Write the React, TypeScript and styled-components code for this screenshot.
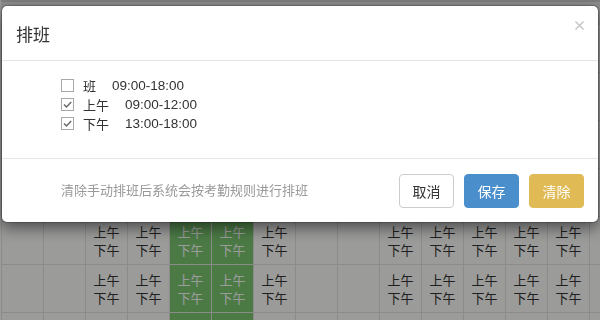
import React, { useState } from 'react';
import styled, { createGlobalStyle } from 'styled-components';

type Shift = { id: string; name: string; time: string; checked: boolean };

const initialShifts: Shift[] = [
  { id: 'day', name: '班', time: '09:00-18:00', checked: false },
  { id: 'am', name: '上午', time: '09:00-12:00', checked: true },
  { id: 'pm', name: '下午', time: '13:00-18:00', checked: true },
];

// column kinds of the calendar behind the dialog
const columns: Array<'empty' | 'work' | 'green'> = [
  'empty', 'empty', 'work', 'work', 'green', 'green', 'work',
  'empty', 'empty', 'work', 'work', 'work', 'work', 'work', 'empty',
];

// which calendar rows carry the am/pm labels (rows under the dialog are left blank)
const rows = [false, false, false, false, true, true, false];

const GlobalStyle = createGlobalStyle`
  html, body {
    margin: 0;
    padding: 0;
    overflow: hidden;
    background: #fff;
  }
  body {
    width: 600px;
    height: 320px;
    font-family: "Liberation Sans", "Noto Sans CJK SC", sans-serif;
    font-size: 13px;
    color: #333;
  }
`;

function App() {
  const [shifts, setShifts] = useState(initialShifts);

  const toggle = (id: string) => {
    setShifts(prev => prev.map(s => (s.id === id ? { ...s, checked: !s.checked } : s)));
  };

  return (
    <>
      <GlobalStyle />
      <Calendar>
        {columns.map((_, i) => (
          <HeadCell key={'h' + i} />
        ))}
        {rows.map((filled, r) =>
          columns.map((kind, i) => (
            <Cell key={r + '-' + i} $green={kind === 'green'}>
              {filled && kind !== 'empty' && (
                <>
                  <span>上午</span>
                  <span>下午</span>
                </>
              )}
            </Cell>
          ))
        )}
      </Calendar>

      <Backdrop />

      <Dialog>
        <Header>
          <Title>排班</Title>
          <CloseBtn aria-label="关闭">
            <svg width="9" height="9" viewBox="0 0 9 9">
              <path d="M0.5 0.5 L8.5 8.5 M8.5 0.5 L0.5 8.5" stroke="#c4c4c4" strokeWidth="1.4" />
            </svg>
          </CloseBtn>
        </Header>
        <Body>
          {shifts.map(s => (
            <ShiftRow key={s.id} onClick={() => toggle(s.id)}>
              <Box>
                {s.checked && (
                  <svg width="11" height="11" viewBox="0 0 11 11">
                    <path d="M2 5.5 L4.5 8 L9.2 3" fill="none" stroke="#6a6a6a" strokeWidth="1.5" />
                  </svg>
                )}
              </Box>
              <ShiftName>{s.name}</ShiftName>
              <ShiftTime>{s.time}</ShiftTime>
            </ShiftRow>
          ))}
        </Body>
        <Footer>
          <Hint>清除手动排班后系统会按考勤规则进行排班</Hint>
          <Btn $variant="default">取消</Btn>
          <Btn $variant="primary">保存</Btn>
          <Btn $variant="warning">清除</Btn>
        </Footer>
      </Dialog>
    </>
  );
}

const Calendar = styled.div`
  display: grid;
  grid-template-columns: repeat(15, 42px);
  grid-template-rows: 24px;
  grid-auto-rows: 48px;
  margin-left: 1px;
`;

const HeadCell = styled.div`
  background: #e9e9e9;
  border-top: 2px solid #cfcfcf;
  box-sizing: border-box;
`;

const Cell = styled.div<{ $green?: boolean }>`
  box-sizing: border-box;
  border-left: 1px solid #e3e3e3;
  border-top: 1px solid #e3e3e3;
  background: ${p => (p.$green ? '#7cc872' : '#fdfdfc')};
  color: ${p => (p.$green ? '#ffffff' : '#333')};
  display: flex;
  flex-direction: column;
  align-items: center;
  justify-content: center;
  font-family: "Noto Sans CJK SC", sans-serif;
  font-size: 13px;
  line-height: 18px;
`;

const Backdrop = styled.div`
  position: fixed;
  inset: 0;
  background: rgba(0, 0, 0, 0.39);
`;

const Dialog = styled.div`
  position: fixed;
  top: 5px;
  left: 1px;
  width: 598px;
  box-sizing: border-box;
  background: #fff;
  border: 1px solid rgba(0, 0, 0, 0.2);
  border-radius: 6px;
  box-shadow: 0 5px 15px rgba(0, 0, 0, 0.5);
  background-clip: padding-box;
`;

const Header = styled.div`
  display: flex;
  align-items: flex-start;
  justify-content: space-between;
  padding: 15px 15px 14px 14px;
  border-bottom: 1px solid #e5e5e5;
`;

const Title = styled.h4`
  margin: 0;
  font-family: "Noto Sans CJK SC", sans-serif;
  font-size: 17px;
  font-weight: 400;
  line-height: 25px;
  color: #333;
`;

const CloseBtn = styled.button`
  border: 0;
  background: transparent;
  padding: 0;
  margin: 0 -1px 0 0;
  width: 9px;
  height: 9px;
  display: flex;
  cursor: pointer;
`;

const Body = styled.div`
  padding: 15px 15px 25px 59px;
`;

const ShiftRow = styled.label`
  display: flex;
  align-items: center;
  height: 19px;
  cursor: pointer;
`;

const Box = styled.span`
  width: 13px;
  height: 13px;
  box-sizing: border-box;
  border: 1px solid #a8a8a8;
  background: #fff;
  display: flex;
  align-items: center;
  justify-content: center;
  margin-right: 9px;
`;

const ShiftName = styled.span`
  font-family: "Noto Sans CJK SC", sans-serif;
  font-size: 13px;
  color: #333;
`;

const ShiftTime = styled.span`
  margin-left: 16px;
  font-size: 13.5px;
  color: #333;
`;

const Footer = styled.div`
  display: flex;
  align-items: center;
  gap: 10px;
  padding: 15px 14px 14px 59px;
  border-top: 1px solid #e5e5e5;
`;

const Hint = styled.span`
  flex: 1;
  color: #999;
  font-family: "Noto Sans CJK SC", sans-serif;
  font-size: 13px;
  margin-top: -3px;
`;

const btnColors = {
  default: { bg: '#fff', border: '#ccc', color: '#333' },
  primary: { bg: '#4a8ecc', border: '#4a8ecc', color: '#fff' },
  warning: { bg: '#dfba55', border: '#dfba55', color: '#fff' },
};

const Btn = styled.button<{ $variant: keyof typeof btnColors }>`
  width: 55px;
  height: 34px;
  padding: 0;
  border-radius: 4px;
  border: 1px solid ${p => btnColors[p.$variant].border};
  background: ${p => btnColors[p.$variant].bg};
  color: ${p => btnColors[p.$variant].color};
  font-family: "Noto Sans CJK SC", sans-serif;
  font-size: 14px;
  line-height: 20px;
  cursor: pointer;
`;

export default App;
